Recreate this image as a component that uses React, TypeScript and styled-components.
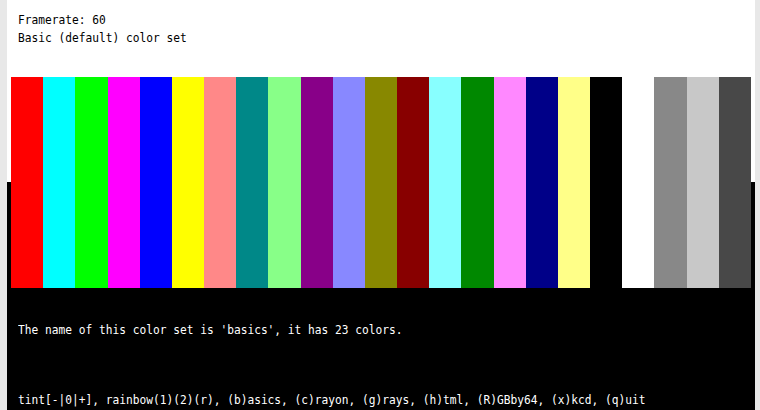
import { createGlobalStyle } from "styled-components";
import styled from "styled-components";

const colors = [
  "#ff0000", "#00ffff", "#00ff00", "#ff00ff", "#0000ff", "#ffff00",
  "#ff8888", "#008888", "#88ff88", "#880088", "#8888ff", "#888800",
  "#880000", "#88ffff", "#008800", "#ff88ff", "#000088", "#ffff88",
  "#000000", "#ffffff", "#888888", "#c8c8c8", "#484848",
];

const GlobalStyle = createGlobalStyle`
  html, body {
    margin: 0;
    background: #e8e8e8;
  }
`;

export default function App() {
  return (
    <>
      <GlobalStyle />
      <Panel>
        <Header>
          <Line>Framerate: 60</Line>
          <Line>Basic (default) color set</Line>
        </Header>
        <Bars>
          {colors.map((c, i) => (
            <Bar key={i} $color={c} />
          ))}
        </Bars>
        <Footer>
          <Line $light>The name of this color set is 'basics', it has 23 colors.</Line>
          <Keys $light>
            tint[-|0|+], rainbow(1)(2)(r), (b)asics, (c)rayon, (g)rays, (h)tml, (R)GBby64, (x)kcd, (q)uit
          </Keys>
        </Footer>
      </Panel>
    </>
  );
}

const Panel = styled.div`
  margin-left: 7px;
  width: 748px;
  min-height: 100vh;
  background: linear-gradient(#ffffff 0, #ffffff 182px, #000000 182px);
  padding: 11px 4px 0;
  box-sizing: border-box;
  display: flex;
  flex-direction: column;
`;

const Header = styled.div`
  padding-left: 7px;
`;

const Line = styled.div<{ $light?: boolean }>`
  font-family: "DejaVu Sans Mono", monospace;
  font-size: 13px;
  line-height: 18px;
  white-space: pre;
  color: ${({ $light }) => ($light ? "#ffffff" : "#000000")};
  transform: scaleX(0.862);
  transform-origin: left center;
`;

const Keys = styled(Line)`
  margin-top: 52px;
`;

const Bars = styled.div`
  margin-top: 30px;
  height: 211px;
  display: grid;
  grid-template-columns: repeat(23, 1fr);
`;

const Bar = styled.div<{ $color: string }>`
  background: ${({ $color }) => $color};
`;

const Footer = styled.div`
  padding: 33px 0 0 7px;
`;
